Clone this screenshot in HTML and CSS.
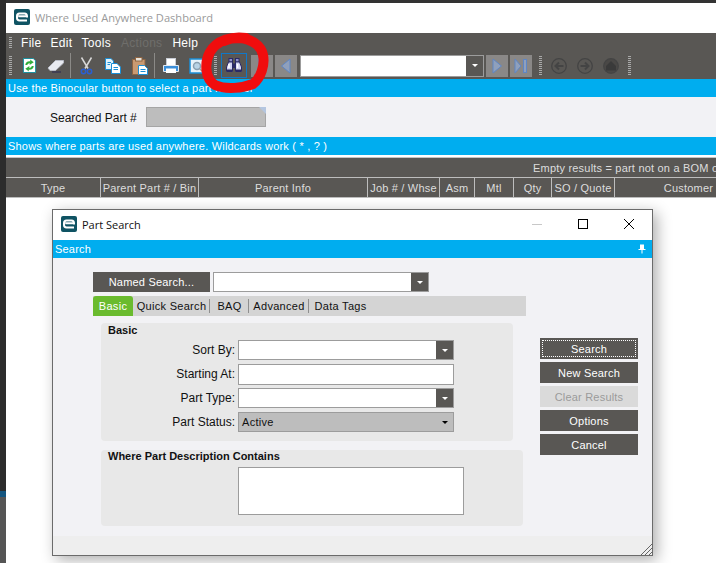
FILE: index.html
```html
<!DOCTYPE html>
<html lang="en">

<head>
    <meta charset="UTF-8">
    <title>Where Used Anywhere Dashboard</title>
    <link rel="stylesheet" href="styles.css">
</head>

<body>
    <div class="screen">
        <div class="desk-edge">
            <div class="edge-dark"></div>
            <div class="edge-blue"></div>
            <div class="edge-grey"></div>
        </div>

        <div class="app">
            <div class="titlebar">
                <svg class="logo" viewBox="0 0 16 16">
                    <rect width="16" height="16" rx="2" fill="#0f5363" />
                    <path d="M13 7.200H4.200M13 11.400H5.500Q3 11.400 3 9V7Q3 4.400 5.500 4.400H10.500Q13 4.400 13 7.200V8.400" fill="none" stroke="#fff" stroke-width="2" />
                </svg>
                <span>Where Used Anywhere Dashboard</span>
            </div>

            <div class="menubar">
                <span class="grip"></span>
                <a class="menu-file">File</a>
                <a>Edit</a>
                <a class="menu-tools">Tools</a>
                <a class="off">Actions</a>
                <a>Help</a>
            </div>

            <div class="toolbar">
                <span class="grip first-grip"></span>
                <span class="tool">
                    <svg viewBox="0 0 16 16" width="15" height="15">
                        <path d="M1.500 0.500H12L14.500 3V15.500H1.500Z" fill="#fff" stroke="#0f8fa0" />
                        <path d="M3.500 7.500Q4 3 9 3.500L8.500 1.500L12.500 4.500L8 7.500L8.500 5.500Q6 5.500 5.500 7.500Z" fill="#2fae3a" />
                        <path d="M12.500 8.500Q12 13 7 12.500L7.500 14.500L3.500 11.500L8 8.500L7.500 10.500Q10 10.500 10.500 8.500Z" fill="#2fae3a" />
                    </svg>
                </span>
                <span class="tool">
                    <svg viewBox="0 0 18 14" width="18" height="14">
                        <path d="M1 9L8.500 1.500L16.500 1.500L16.500 4L8.500 11.500H3Z" fill="#e9ebf1" stroke="#b9bcc6" />
                        <path d="M5 13H14" stroke="#2a2850" />
                    </svg>
                </span>
                <span class="sep"></span>
                <span class="tool tool-cut">
                    <svg viewBox="0 0 13 18" width="13" height="18">
                        <path d="M1.500 0.500L8 11.500M11.500 0.500L5 11.500" stroke="#d8d8d8" stroke-width="1.500" />
                        <circle cx="3.500" cy="14.500" r="2.200" fill="none" stroke="#2a5fd0" stroke-width="1.500" />
                        <circle cx="9.500" cy="14.500" r="2.200" fill="none" stroke="#2a5fd0" stroke-width="1.500" />
                    </svg>
                </span>
                <span class="tool">
                    <svg viewBox="0 0 16 16" width="16" height="16">
                        <path d="M0.500 0.500H6L8.500 3V11.500H0.500Z" fill="#dff1fb" stroke="#1b8fd6" />
                        <path d="M6.500 5.500H12L15.500 9V15.500H6.500Z" fill="#fff" stroke="#1b8fd6" />
                        <path d="M8.500 9.500H13M8.500 11.500H13M2.500 4.500H6M2.500 6.500H5" stroke="#1b8fd6" />
                    </svg>
                </span>
                <span class="tool">
                    <svg viewBox="0 0 16 18" width="16" height="18">
                        <rect x="0.500" y="2.500" width="12.500" height="15" fill="#c99a72" stroke="#8c6443" />
                        <rect x="3.500" y="0.500" width="6.500" height="3.500" fill="#e8e2d8" stroke="#8c6443" />
                        <path d="M6.500 8.500H12.500L15.500 11.500V17.500H6.500Z" fill="#fff" stroke="#1b8fd6" />
                        <path d="M8.500 12.500H13.500M8.500 14.500H13.500" stroke="#1b8fd6" />
                    </svg>
                </span>
                <span class="sep sep-two"></span>
                <span class="tool">
                    <svg viewBox="0 0 16 16" width="16" height="16">
                        <rect x="3.500" y="0.500" width="9" height="7" fill="#fff" stroke="#c8ccd4" />
                        <path d="M0.500 7.500H15.500V13.500H0.500Z" fill="#3b8ed8" stroke="#e4e8ee" />
                        <rect x="3" y="10.500" width="10" height="4.500" fill="#fff" />
                    </svg>
                </span>
                <span class="tool tool-preview">
                    <svg viewBox="0 0 16 16" width="16" height="16">
                        <rect x="1" y="1" width="13" height="14" fill="#e8f2fa" stroke="#1b8fd6" stroke-width="1.500" />
                        <circle cx="8" cy="8" r="3.500" fill="#b9d3e6" stroke="#8aa0b2" stroke-width="1.500" />
                        <path d="M10.500 10.500L13.500 13.500" stroke="#9a9a9a" stroke-width="1.500" />
                    </svg>
                </span>
                <span class="grip grip-mid"></span>
                <span class="bino">
                    <svg viewBox="0 0 16 15" width="16" height="15">
                        <rect x="3" y="0.500" width="3.500" height="3.500" fill="#8f8fc8" stroke="#2b2a66" />
                        <rect x="9.500" y="0.500" width="3.500" height="3.500" fill="#8f8fc8" stroke="#2b2a66" />
                        <path d="M2.500 4H6.500V13.500H0.500V9Z" fill="#d4d4f2" stroke="#2b2a66" />
                        <path d="M13.500 4H9.500V13.500H15.500V9Z" fill="#d4d4f2" stroke="#2b2a66" />
                        <path d="M6.500 5.500H9.500V10H6.500Z" fill="#2b2a66" />
                        <path d="M1 12.500H6M10 12.500H15" stroke="#2b2a66" stroke-width="2" />
                        <path d="M3 6V10M11.500 6V10" stroke="#fff" stroke-width="1.500" />
                    </svg>
                </span>
                <span class="nav nav-first">
                    <svg viewBox="0 0 12 18" width="12" height="18"><rect x="2.500" y="1.500" width="4" height="15" fill="#97a9c8" stroke="#6c8ec4" /></svg>
                </span>
                <span class="nav">
                    <svg viewBox="0 0 12 18" width="12" height="18"><path d="M10 2V16L1.500 9Z" fill="#8fa0bc" stroke="#5f86c4" /></svg>
                </span>
                <span class="combo combo-nav"><span class="combo-btn"><i></i></span></span>
                <span class="nav nav-next">
                    <svg viewBox="0 0 12 18" width="12" height="18"><path d="M2 2V16L10.500 9Z" fill="#8fa0bc" stroke="#5f86c4" /></svg>
                </span>
                <span class="nav">
                    <svg viewBox="0 0 14 18" width="14" height="18">
                        <path d="M1 2V16L7 9Z" fill="#8fa0bc" stroke="#5f86c4" />
                        <rect x="9.500" y="2.500" width="3" height="13" fill="#8fa0bc" stroke="#5f86c4" />
                    </svg>
                </span>
                <span class="grip grip-nav"></span>
                <span class="tool-off">
                    <svg viewBox="0 0 16 16" width="16" height="16"><circle cx="8" cy="8" r="7.300" fill="none" stroke="#444" stroke-width="1.300" /><path d="M12.500 8H5M8 4.500L4.500 8L8 11.500" fill="none" stroke="#444" stroke-width="2" /></svg>
                </span>
                <span class="tool-off">
                    <svg viewBox="0 0 16 16" width="16" height="16"><circle cx="8" cy="8" r="7.300" fill="none" stroke="#444" stroke-width="1.300" /><path d="M3.500 8H11M8 4.500L11.500 8L8 11.500" fill="none" stroke="#444" stroke-width="2" /></svg>
                </span>
                <span class="tool-off">
                    <svg viewBox="0 0 16 16" width="16" height="16"><circle cx="8" cy="8" r="7.300" fill="#4a4846" stroke="#444" stroke-width="1.300" /><path d="M8 3L13 8V12.500H3V8Z" fill="#3a3a3a" /></svg>
                </span>
                <span class="grip grip-end"></span>
            </div>

            <div class="bluebar bar-hint">Use the Binocular button to select a part number</div>

            <div class="searched">
                <label>Searched Part #</label>
                <span class="searched-field"></span>
            </div>

            <div class="bluebar">Shows where parts are used anywhere. Wildcards work ( * , ? )</div>

            <div class="results">
                <div class="results-note">Empty results = part not on a BOM or</div>
                <div class="results-head">
                    <span class="col-type">Type</span>
                    <span class="col-parent">Parent Part # / Bin</span>
                    <span class="col-info">Parent Info</span>
                    <span class="col-job">Job # / Whse</span>
                    <span class="col-asm">Asm</span>
                    <span class="col-mtl">Mtl</span>
                    <span class="col-qty">Qty</span>
                    <span class="col-so">SO / Quote</span>
                    <span class="col-cust">Customer</span>
                </div>
            </div>
        </div>

        <!-- red marker scribble on the screenshot -->
        <svg class="scribble" viewBox="0 0 716 563" width="716" height="563">
            <path d="M246 38C232 36 217 40 210 52C204 63 205 79 215 85C226 90 243 88 253 84C261 78 265 65 263 55C261 45 251 39 240 38C234 38 228 39 224 41" fill="none" stroke="#f00d0d" stroke-width="10" stroke-linecap="round" />
        </svg>

        <div class="dialog">
            <div class="dialog-title">
                <svg class="logo" viewBox="0 0 16 16">
                    <rect width="16" height="16" rx="2" fill="#0f5363" />
                    <path d="M13 7.200H4.200M13 11.400H5.500Q3 11.400 3 9V7Q3 4.400 5.500 4.400H10.500Q13 4.400 13 7.200V8.400" fill="none" stroke="#fff" stroke-width="2" />
                </svg>
                <span class="dialog-name">Part Search</span>
                <span class="win-btn win-min"><i></i></span>
                <span class="win-btn win-max"><i></i></span>
                <span class="win-btn win-close">
                    <svg viewBox="0 0 12 12" width="12" height="12"><path d="M1 1L11 11M11 1L1 11" stroke="#000" /></svg>
                </span>
            </div>
            <div class="bluebar dialog-bar">
                <span>Search</span>
                <svg viewBox="0 0 8 10" width="8" height="10"><path d="M2 0.500H6V5H7.500V6H4.500V9.500H3.500V6H0.500V5H2Z" fill="#fff" /></svg>
            </div>
            <div class="dialog-body">
                <div class="form">
                    <div class="named-row">
                        <button class="btn btn-named">Named Search...</button>
                        <span class="combo combo-named"><span class="combo-btn"><i></i></span></span>
                    </div>
                    <div class="tabs">
                        <span class="tab tab-on">Basic</span>
                        <span class="tab tab-quick">Quick Search</span>
                        <span class="tab tab-baq">BAQ</span>
                        <span class="tab tab-adv">Advanced</span>
                        <span class="tab tab-tags">Data Tags</span>
                    </div>
                    <div class="group group-basic">
                        <div class="group-title">Basic</div>
                        <div class="field">
                            <label>Sort By:</label>
                            <span class="combo"><span class="combo-btn"><i></i></span></span>
                        </div>
                        <div class="field">
                            <label>Starting At:</label>
                            <span class="input"></span>
                        </div>
                        <div class="field">
                            <label>Part Type:</label>
                            <span class="combo"><span class="combo-btn"><i></i></span></span>
                        </div>
                        <div class="field">
                            <label>Part Status:</label>
                            <span class="combo combo-grey">Active<span class="combo-btn"><i></i></span></span>
                        </div>
                    </div>
                    <div class="group group-desc">
                        <div class="group-title">Where Part Description Contains</div>
                        <div class="input textarea"></div>
                    </div>
                </div>
                <div class="actions">
                    <button class="btn btn-focus"><span>Search</span></button>
                    <button class="btn">New Search</button>
                    <button class="btn btn-off">Clear Results</button>
                    <button class="btn">Options</button>
                    <button class="btn">Cancel</button>
                </div>
            </div>
            <div class="dialog-status">
                <svg class="resize" viewBox="0 0 11 11" width="11" height="11"><path d="M0 11L11 0M4 11L11 4M8 11L11 8" stroke="#666" stroke-width="1" /></svg>
            </div>
        </div>
    </div>
</body>

</html>
```

FILE: styles.css
```css
* {
    box-sizing: border-box;
}

html,
body {
    margin: 0;
    height: 100%;
    overflow: hidden;
}

body {
    font-family: "Liberation Sans", Arial, sans-serif;
    font-size: 11px;
    letter-spacing: 0.2px;
    color: #111;
    background-color: #fff;
}

.screen {
    position: relative;
    display: flex;
    width: 716px;
    height: 563px;
    overflow: hidden;
    padding-top: 3px;
    background: linear-gradient(#333 3px, #fff 3px);
}

.desk-edge {
    display: flex;
    flex-direction: column;
    flex: 0 0 6px;
    margin-top: -3px;
}

.edge-dark {
    height: 491px;
    background-color: #2c2c2c;
}

.edge-blue {
    height: 6px;
    background-color: #14557f;
}

.edge-grey {
    flex: 1;
    background-color: #555;
}

.app {
    display: flex;
    flex-direction: column;
    flex: 1;
    min-width: 0;
}

/* title + menus */
.titlebar {
    display: flex;
    align-items: center;
    height: 30px;
    padding: 0 0 2px 8px;
    font-family: "Open Sans", sans-serif;
    font-size: 11.100px;
    letter-spacing: 0;
    color: #9a9a9a;
    background-color: #fff;
}

.logo {
    width: 16px;
    height: 16px;
    flex: none;
    margin-right: 5px;
}

.menubar {
    display: flex;
    align-items: center;
    height: 19px;
    padding-left: 3px;
    color: #fff;
    background-color: #595754;
}

.menubar a {
    margin-right: 9px;
    font-size: 12px;
    letter-spacing: 0.3px;
}

.menubar .menu-file {
    margin-left: 9px;
}

.menubar .menu-tools {
    margin-right: 10px;
}

.menubar .off {
    color: #6f6e6b;
    margin-right: 10px;
}

.grip {
    flex: none;
    display: block;
    width: 3px;
    height: 19px;
    background: repeating-linear-gradient(#a9a9a9 0 1px, #595754 1px 2px);
}

.menubar .grip {
    height: 12px;
}

.toolbar {
    display: flex;
    align-items: center;
    height: 27px;
    padding-left: 3px;
    background-color: #595754;
}

.first-grip {
    margin-right: 4px;
}

.tool {
    display: flex;
    align-items: center;
    justify-content: center;
    flex: none;
    width: 26px;
    height: 25px;
    margin-right: 1px;
}

.sep {
    flex: none;
    width: 1px;
    height: 25px;
    margin-right: 2px;
    background-color: #8b8a87;
}

.sep-two {
    margin-left: 0;
    margin-right: 3px;
}

.tool-preview {
    margin-left: -1px;
}

.grip-mid {
    margin-left: 3px;
    margin-right: 4px;
}

.bino {
    display: flex;
    align-items: center;
    justify-content: center;
    flex: none;
    width: 26px;
    height: 25px;
    margin-right: 4px;
    border: 1px solid #0f78c8;
}

.nav {
    display: flex;
    align-items: center;
    justify-content: center;
    flex: none;
    width: 22px;
    height: 22px;
    margin-right: 2px;
    background-color: #8a8887;
}

.nav-next {
    margin-left: 2px;
}

.grip-nav {
    margin-left: 5px;
    margin-right: 4px;
}

.tool-off {
    display: flex;
    align-items: center;
    justify-content: center;
    flex: none;
    width: 26px;
    height: 22px;
}

.grip-end {
    margin-left: 4px;
}

.bluebar {
    display: flex;
    align-items: center;
    height: 18px;
    padding-left: 2px;
    color: #fff;
    background-color: #00adef;
}

/* searched part row */
.searched {
    display: flex;
    align-items: center;
    height: 40px;
    padding-left: 44px;
    background-color: #f2f2f5;
}

.searched label {
    width: 96px;
    padding-top: 1px;
    font-size: 12px;
    letter-spacing: 0;
}

.searched-field {
    position: relative;
    width: 120px;
    height: 20px;
    border: 1px solid #a5a5a5;
    background-color: #bdbdbd;
}

.searched-field::after {
    content: "";
    position: absolute;
    top: -1px;
    right: -1px;
    border-top: 7px solid #b4c6e0;
    border-left: 7px solid transparent;
}

/* results grid, wider than the window */
.results {
    width: 760px;
    margin-top: 2px;
    border-top: 1px solid #c4c4c4;
    color: #ddd;
    background-color: #595754;
}

.results-note {
    height: 20px;
    padding-left: 527px;
    line-height: 20px;
    white-space: nowrap;
    overflow: hidden;
    border-bottom: 1px solid #bdbdbd;
}

.results-head {
    display: flex;
    height: 20px;
    line-height: 20px;
    white-space: nowrap;
    border-bottom: 1px solid #bdbdbd;
}

.results-head span {
    flex: none;
    text-align: center;
    border-right: 1px solid #bdbdbd;
}

.col-type { width: 95px; }
.col-parent { width: 98px; }
.col-info { width: 169px; }
.col-job { width: 72px; }
.col-asm { width: 35px; }
.col-mtl { width: 39px; }
.col-qty { width: 38px; }
.col-so { width: 63px; }
.col-cust { width: 148px; }

/* floating window */
.dialog {
    position: absolute;
    left: 52px;
    top: 209px;
    display: flex;
    flex-direction: column;
    width: 601px;
    height: 347px;
    border: 1px solid #6b6b6b;
    background-color: #f2f2f5;
    box-shadow: 4px 4px 14px rgba(0, 0, 0, 0.32);
}

.dialog-title {
    display: flex;
    align-items: center;
    height: 30px;
    padding: 0 0 2px 8px;
    font-family: "Open Sans", sans-serif;
    font-size: 11px;
    letter-spacing: 0;
    color: #111;
    background-color: #fff;
}

.dialog-name {
    flex: 1;
}

.win-btn {
    display: flex;
    align-items: center;
    justify-content: center;
    flex: none;
    width: 46px;
    height: 30px;
}

.win-min i {
    width: 10px;
    height: 1px;
    background-color: #c8c8c8;
}

.win-max i {
    width: 10px;
    height: 10px;
    border: 1px solid #000;
}

.dialog-bar {
    justify-content: space-between;
    padding-right: 6px;
}

.dialog-body {
    display: flex;
    flex: 1;
    padding: 14px 0 0 40px;
}

.form {
    width: 433px;
}

.named-row {
    display: flex;
    height: 20px;
}

.btn {
    display: block;
    width: 98px;
    height: 21px;
    padding: 0;
    border: 0;
    font-family: inherit;
    font-size: 11px;
    letter-spacing: 0.2px;
    color: #fff;
    background-color: #595754;
}

.btn-named {
    width: 117px;
    height: 20px;
    margin-right: 3px;
}

.combo-named {
    width: 216px;
}

.tabs {
    display: flex;
    height: 20px;
    margin-top: 4px;
    background-color: #d4d4d4;
}

.tab {
    height: 20px;
    line-height: 20px;
    text-align: center;
    letter-spacing: 0.3px;
    white-space: nowrap;
    background: linear-gradient(#8f8f8f, #8f8f8f) no-repeat right 3px / 1px 14px;
}

.tab-on {
    width: 40px;
    color: #fff;
    border-radius: 3px 3px 0 0;
    background: #6abb2e;
}

.tab-quick { width: 77px; }
.tab-baq { width: 39px; }
.tab-adv { width: 60px; }
.tab-tags { width: 63px; background: none; }

.group {
    margin-left: 8px;
    border-radius: 4px;
    background-color: #e8e8e8;
}

.group-basic {
    width: 412px;
    height: 118px;
    margin-top: 7px;
    padding: 1px 0 0 7px;
}

.group-desc {
    width: 422px;
    height: 76px;
    margin-top: 9px;
    padding: 0 0 0 7px;
}

.group-title {
    height: 16px;
    line-height: 12px;
    font-weight: bold;
    font-size: 11px;
    letter-spacing: 0;
}

.field {
    display: flex;
    align-items: center;
    height: 20px;
    margin-bottom: 4px;
}

.field label {
    width: 127px;
    margin-right: 3px;
    text-align: right;
    font-size: 12px;
    letter-spacing: 0;
}

.input,
.combo {
    display: block;
    position: relative;
    width: 216px;
    height: 20px;
    border: 1px solid #9c9c9c;
    background-color: #fff;
}

.field .input {
    height: 21px;
}

.textarea {
    width: 226px;
    height: 48px;
    margin: 1px 0 0 130px;
}

.combo-btn {
    position: absolute;
    top: 0;
    right: 0;
    bottom: 0;
    display: flex;
    align-items: center;
    justify-content: center;
    width: 17px;
    background-color: #595754;
}

.combo-btn i {
    border-top: 3px solid #fff;
    border-left: 3px solid transparent;
    border-right: 3px solid transparent;
}

.combo-nav {
    width: 184px;
    height: 22px;
    margin-left: 1px;
}

.combo-grey {
    padding-left: 3px;
    line-height: 18px;
    letter-spacing: 0.3px;
    background-color: #bdbdbd;
}

.combo-grey .combo-btn {
    background-color: transparent;
}

.combo-grey .combo-btn i {
    border-top-color: #000;
}

.actions {
    display: flex;
    flex-direction: column;
    gap: 3px;
    margin: 66px 0 0 14px;
}

.btn-focus {
    padding: 2px;
}

.btn-focus span {
    display: block;
    height: 17px;
    line-height: 16px;
    border: 1px dotted #fff;
}

.btn-off {
    color: #9a9a9a;
    background-color: #dadada;
}

.dialog-status {
    position: relative;
    height: 19px;
    background-color: #eee;
}

.resize {
    position: absolute;
    right: 0;
    bottom: 0;
}

/* marker over the toolbar */
.scribble {
    position: absolute;
    left: 0;
    top: 0;
    pointer-events: none;
}
```
